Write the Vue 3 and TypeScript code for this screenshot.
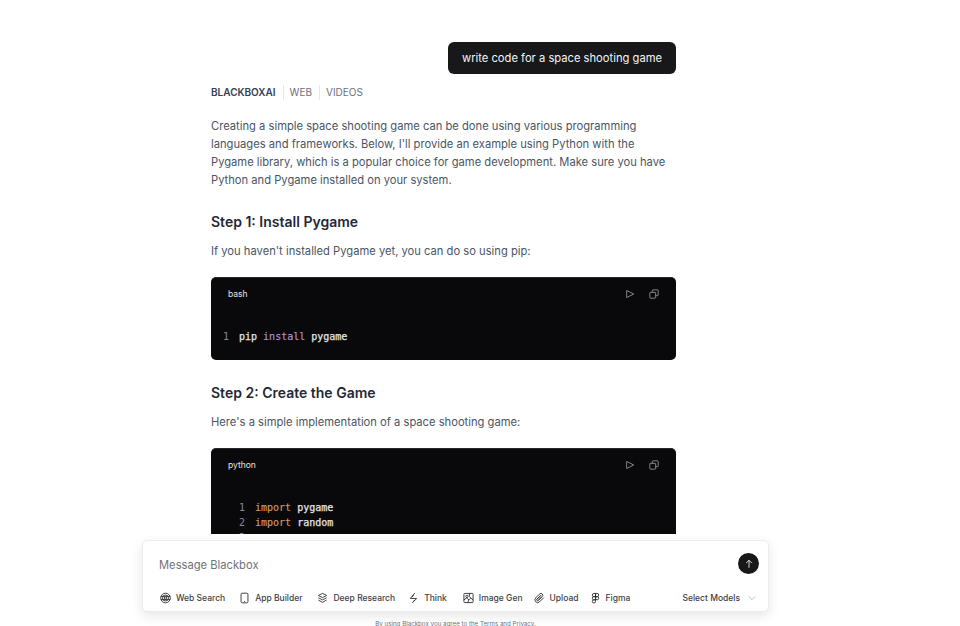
<template>
  <div class="page">
    <main class="chat">
      <div class="user-row">
        <div class="user-msg">write code for a space shooting game</div>
      </div>

      <div class="tabs">
        <span class="tab active">BLACKBOXAI</span>
        <span class="tab">WEB</span>
        <span class="tab">VIDEOS</span>
      </div>

      <p class="intro">
        Creating a simple space shooting game can be done using various programming
        languages and frameworks. Below, I'll provide an example using Python with the
        Pygame library, which is a popular choice for game development. Make sure you have
        Python and Pygame installed on your system.
      </p>

      <h3>Step 1: Install Pygame</h3>
      <p class="lead">If you haven't installed Pygame yet, you can do so using pip:</p>

      <div class="code-block">
        <div class="code-head">
          <span class="lang">bash</span>
          <div class="code-actions">
            <svg viewBox="0 0 24 24" class="code-icon"><path d="M4 3.5 21 12 4 20.5Z" /></svg>
            <svg viewBox="0 0 24 24" class="code-icon"><rect x="2" y="8" width="14" height="14" rx="1.5" /><path d="M8 8V3.5A1.5 1.5 0 0 1 9.5 2h11A1.5 1.5 0 0 1 22 3.5v11a1.5 1.5 0 0 1-1.5 1.5H16" /></svg>
          </div>
        </div>
        <div class="code-body bash">
          <div class="line"><span class="num">1</span><span class="txt">pip <span class="purple">install</span> pygame</span></div>
        </div>
      </div>

      <h3>Step 2: Create the Game</h3>
      <p class="lead">Here's a simple implementation of a space shooting game:</p>

      <div class="code-block tall">
        <div class="code-head">
          <span class="lang">python</span>
          <div class="code-actions">
            <svg viewBox="0 0 24 24" class="code-icon"><path d="M4 3.5 21 12 4 20.5Z" /></svg>
            <svg viewBox="0 0 24 24" class="code-icon"><rect x="2" y="8" width="14" height="14" rx="1.5" /><path d="M8 8V3.5A1.5 1.5 0 0 1 9.5 2h11A1.5 1.5 0 0 1 22 3.5v11a1.5 1.5 0 0 1-1.5 1.5H16" /></svg>
          </div>
        </div>
        <div class="code-body py">
          <div class="line" v-for="l in pyLines" :key="l.n">
            <span class="num">{{ l.n }}</span>
            <span class="txt"><span class="orange">{{ l.kw }}</span> {{ l.mod }}</span>
          </div>
        </div>
      </div>
    </main>

    <div class="composer-wrap">
      <div class="composer">
        <div class="composer-top">
          <span class="placeholder">Message Blackbox</span>
          <button class="send">
            <svg viewBox="0 0 24 24" width="10" height="10"><path d="M12 21V3M5 10l7-7 7 7" /></svg>
          </button>
        </div>
        <div class="composer-tools">
          <div class="tool" v-for="t in tools" :key="t.label">
            <svg viewBox="0 0 24 24" class="tool-icon" v-html="t.icon"></svg>
            <span>{{ t.label }}</span>
          </div>
          <div class="models">
            <span>Select Models</span>
            <svg viewBox="0 0 24 24" width="8" height="8"><path d="m2 7 10 10L22 7" /></svg>
          </div>
        </div>
      </div>
      <div class="terms">By using Blackbox you agree to the Terms and Privacy.</div>
    </div>
  </div>
</template>

<script setup lang="ts">
const pyLines = [
  { n: 1, kw: 'import', mod: 'pygame' },
  { n: 2, kw: 'import', mod: 'random' },
  { n: 3, kw: '', mod: '' },
]

const tools = [
  { label: 'Web Search', icon: '<circle cx="12" cy="12" r="10.5"/><circle cx="12" cy="12" r="6.5"/><circle cx="12" cy="12" r="2.5"/><path d="M2 8.5h20M2 15.5h20"/>' },
  { label: 'App Builder', icon: '<rect x="4.5" y="1.5" width="15" height="21" rx="2.5"/><path d="M11 19.5h2"/>' },
  { label: 'Deep Research', icon: '<path d="m12 2 9 4.5-9 4.5-9-4.5Z"/><path d="m3 11.5 9 4.5 9-4.5"/><path d="m3 16.5 9 5 9-5"/>' },
  { label: 'Think', icon: '<path d="M15 1 5 13h14L9 23"/><path d="M12 6l-3 4M15 16l-3 3"/>' },
  { label: 'Image Gen', icon: '<rect x="2" y="2" width="20" height="20" rx="2"/><circle cx="8.5" cy="8.5" r="2.5"/><path d="m2 16 6-4 5 4 4-4 5 4"/><path d="M13 16l-3 6M14 2v7l3 3"/>' },
  { label: 'Upload', icon: '<path d="m21.44 11.05-9.19 9.19a6 6 0 0 1-8.49-8.49l8.57-8.57A4 4 0 1 1 18 8.84l-8.59 8.57a2 2 0 0 1-2.83-2.83l8.49-8.48"/><path d="m6 15 8.5-8.5M9 17l8-8"/>' },
  { label: 'Figma', icon: '<path d="M5 5.5A3.5 3.5 0 0 1 8.5 2H12v7H8.5A3.5 3.5 0 0 1 5 5.5z"/><path d="M12 2h3.5a3.5 3.5 0 1 1 0 7H12V2z"/><path d="M12 12.5a3.5 3.5 0 1 1 7 0 3.5 3.5 0 1 1-7 0z"/><path d="M5 19.5A3.5 3.5 0 0 1 8.5 16H12v3.5a3.5 3.5 0 1 1-7 0z"/><path d="M5 12.5A3.5 3.5 0 0 1 8.5 9H12v7H8.5A3.5 3.5 0 0 1 5 12.5z"/>' },
]
</script>

<style>
html, body {
  margin: 0;
  background: #fff;
  overflow: hidden;
}
</style>

<style scoped>
.page {
  position: relative;
  height: 626px;
  overflow: hidden;
  font-family: Inter, "Liberation Sans", sans-serif;
  color: #4b5563;
}

.chat {
  width: 465px;
  margin-left: 211px;
  padding-top: 42px;
}

.user-row {
  display: flex;
  justify-content: flex-end;
}

.user-msg {
  background: #18181b;
  color: #f4f4f5;
  font-size: 11.2px;
  line-height: 20px;
  padding: 6px 14px;
  border-radius: 6px;
}

.tabs {
  display: flex;
  align-items: center;
  margin-top: 10px;
  height: 16px;
}

.tab {
  font-size: 10px;
  line-height: 15px;
  color: #6b7280;
  padding: 0 7px 0 6px;
  border-left: 1px solid #e5e7eb;
}

.tab:first-child {
  padding-left: 0;
  border-left: 0;
}

.tab.active {
  font-weight: 600;
  color: #374151;
}

.intro {
  margin: 17px 0 0;
  font-size: 11.2px;
  line-height: 18px;
  width: 457px;
}

h3 {
  margin: 21px 0 0;
  font-size: 14px;
  line-height: 24px;
  font-weight: 600;
  color: #1f2937;
}

.lead {
  margin: 8px 0 0;
  font-size: 11.2px;
  line-height: 18px;
}

.code-block {
  margin-top: 17px;
  background: #09090b;
  border-radius: 5px;
  box-sizing: border-box;
  border-top: 1px solid #27272a;
  height: 83px;
  overflow: hidden;
}

.code-block.tall {
  height: 120px;
}

.code-head {
  display: flex;
  justify-content: space-between;
  align-items: center;
  padding: 7px 17px 0;
  height: 18px;
}

.lang {
  color: #e4e4e7;
  font-size: 8.5px;
}

.code-actions {
  display: flex;
  gap: 14px;
}

.code-icon {
  width: 10px;
  height: 10px;
  fill: none;
  stroke: #9a9aa2;
  stroke-width: 2;
}

.code-body {
  font-family: "DejaVu Sans Mono", "Liberation Mono", monospace;
  font-size: 10px;
  line-height: 15px;
  color: #e4e4e7;
  -webkit-text-stroke: 0.25px;
}

.bash {
  padding: 26px 0 0 12px;
}

.py {
  padding: 26px 0 0 28px;
}

.line {
  display: flex;
}

.num {
  color: #7d8aa5;
  -webkit-text-stroke: 0;
  width: 16px;
}

.purple {
  color: #b392d6;
  -webkit-text-stroke: 0.15px;
}

.orange {
  color: #d19a66;
  -webkit-text-stroke: 0.15px;
}

.composer-wrap {
  position: absolute;
  left: 142px;
  top: 534px;
  width: 627px;
  padding-top: 6px;
  height: 92px;
  box-sizing: border-box;
  background: #fff;
}

.composer {
  background: #fff;
  border: 1px solid #ececef;
  border-radius: 5px;
  box-shadow: 0 4px 12px rgba(0, 0, 0, 0.1);
  height: 72px;
  box-sizing: border-box;
  padding: 0 9px 0 17px;
}

.composer-top {
  display: flex;
  justify-content: space-between;
  align-items: flex-start;
  height: 47px;
}

.placeholder {
  margin-top: 17px;
  margin-left: -1px;
  font-size: 11.2px;
  line-height: 14px;
  color: #71717a;
}

.send {
  margin-top: 12px;
  width: 21px;
  height: 21px;
  border: 0;
  padding: 0;
  border-radius: 50%;
  background: #18181b;
  display: flex;
  align-items: center;
  justify-content: center;
}

.send svg {
  fill: none;
  stroke: #fff;
  stroke-width: 2;
}

.composer-tools {
  display: flex;
  align-items: center;
  gap: 14px;
  padding-top: 4px;
  font-size: 8.5px;
  font-weight: 500;
  color: #3f3f46;
}

.tool {
  display: flex;
  align-items: center;
  gap: 5px;
}

.tool:nth-child(3) { margin-left: 1px; }
.tool:nth-child(4) { margin-left: -1px; }
.tool:nth-child(5) { margin-left: 2px; }
.tool:nth-child(6) { margin-left: -3px; }
.tool:nth-child(7) { margin-left: -3px; }

.tool-icon {
  width: 11px;
  height: 12px;
  fill: none;
  stroke: #27272a;
  stroke-width: 1.9;
}

.models {
  margin-left: auto;
  display: flex;
  align-items: center;
  gap: 8px;
  padding-right: 3px;
}

.models svg {
  fill: none;
  stroke: #9ca3af;
  stroke-width: 2;
}

.terms {
  margin-top: 8px;
  text-align: center;
  font-size: 6.2px;
  color: #71717a;
}
</style>
